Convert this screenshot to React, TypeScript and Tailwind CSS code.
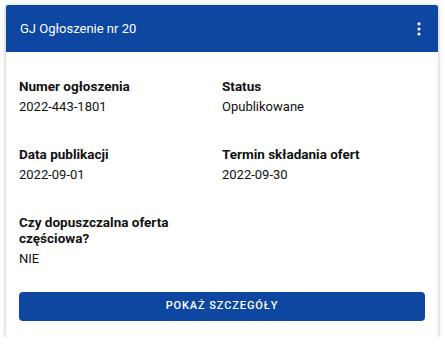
const fields = [
  { label: "Numer ogłoszenia", value: "2022-443-1801" },
  { label: "Status", value: "Opublikowane" },
  { label: "Data publikacji", value: "2022-09-01" },
  { label: "Termin składania ofert", value: "2022-09-30" },
  { label: "Czy dopuszczalna oferta częściowa?", value: "NIE" },
];

const MoreIcon = () => (
  <svg width="18" height="18" viewBox="0 0 18 18" fill="white">
    <circle cx="9" cy="3.8" r="1.6" />
    <circle cx="9" cy="9" r="1.6" />
    <circle cx="9" cy="14" r="1.6" />
  </svg>
);

const App = () => {
  return (
    <div className="pt-[5px] pl-[6px] font-['Roboto',sans-serif]">
      <div className="w-[432px] bg-white rounded-[2px] shadow-[0_1px_4px_rgba(0,0,0,0.3)]">
        {/* header */}
        <div className="h-[47px] bg-[#0d47a1] rounded-t-[2px] flex items-center justify-between pl-[14px] pr-[10px]">
          <span className="text-white text-[13px] leading-5">GJ Ogłoszenie nr 20</span>
          <MoreIcon />
        </div>

        <div className="px-[13px] pt-[26px] pb-[16px]">
          <div className="grid grid-cols-2 gap-y-[29px]">
            {fields.map((f) => (
              <div key={f.label}>
                <div className="text-[13.5px] leading-4 font-bold text-[#111]">{f.label}</div>
                <div className="mt-[3px] text-[13px] leading-5 text-[#111]">{f.value}</div>
              </div>
            ))}
          </div>

          <button className="mt-[23px] w-full h-[29px] rounded-[4px] bg-[#0d47a1] text-white text-[11px] font-medium tracking-[0.9px] uppercase">
            Pokaż szczegóły
          </button>
        </div>
      </div>
    </div>
  );
};

export default App;
